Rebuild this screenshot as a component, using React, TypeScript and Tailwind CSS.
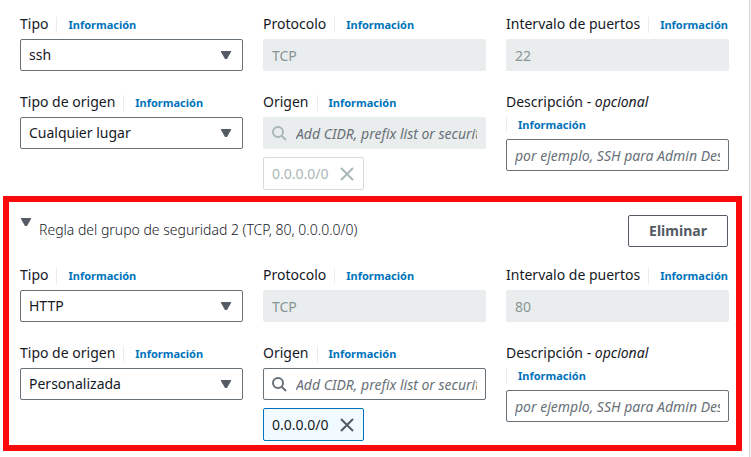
import { useId, type ReactNode } from "react";

type Rule = {
  type: string;
  port: string;
  source: string;
  locked: boolean;
};

const box =
  "block h-8 w-full rounded-xs border border-[#687078] bg-white px-2 text-sm text-[#16191f] outline-none placeholder:italic placeholder:text-[#687078] placeholder:opacity-100 disabled:border-[#eaeded] disabled:bg-[#eaeded] disabled:text-[#879596]";

function Triangle({ className = "" }: { className?: string }) {
  return (
    <svg aria-hidden="true" viewBox="0 0 10 8" className={`h-2 w-2.5 fill-[#545b64] ${className}`}>
      <path d="M0 0h10v1L6 8H4L0 1Z" />
    </svg>
  );
}

function Field({
  id,
  label,
  children,
}: {
  id: string;
  label: ReactNode;
  children: ReactNode;
}) {
  return (
    <div className="min-w-0">
      <div className="mb-1 flex flex-wrap gap-x-2">
        <label htmlFor={id} className="text-sm leading-[22px] text-[#16191f]">
          {label}
        </label>
        <a
          href="#info"
          className="mt-1 mb-0.5 h-4 border-l border-[#eaeded] pl-[11px] text-[11px] leading-4 font-bold text-[#0073bb]"
        >
          Información
        </a>
      </div>
      {children}
    </div>
  );
}

function SelectField({ label, value }: { label: string; value: string }) {
  const id = useId();
  return (
    <Field id={id} label={label}>
      <div className="relative">
        <select id={id} className={`${box} appearance-none`} defaultValue={value}>
          <option>{value}</option>
        </select>
        <Triangle className="pointer-events-none absolute top-3 right-3" />
      </div>
    </Field>
  );
}

function ReadonlyField({ label, value }: { label: string; value: string }) {
  const id = useId();
  return (
    <Field id={id} label={label}>
      <input id={id} className={box} defaultValue={value} disabled />
    </Field>
  );
}

function SourceField({ locked }: { locked: boolean }) {
  const id = useId();
  return (
    <Field id={id} label="Origen">
      <div className="relative">
        <input
          id={id}
          type="text"
          disabled={locked}
          placeholder="Add CIDR, prefix list or security group"
          className={`${box} pl-8`}
        />
        <svg
          aria-hidden="true"
          viewBox="0 0 16 16"
          className={`pointer-events-none absolute top-2 left-2 size-4 fill-none stroke-2 ${locked ? "stroke-[#aab7b8]" : "stroke-[#687078]"}`}
        >
          <circle cx="7" cy="7" r="5" />
          <path d="m10.5 10.5 4.5 4.5" />
        </svg>
      </div>
      <div
        className={`mt-2 inline-flex h-[33px] items-center gap-2.5 rounded-xs border px-2 align-top text-sm ${locked ? "border-[#d5dbdb] bg-white text-[#aab7b8]" : "border-[#0073bb] bg-[#f1faff] text-[#16191f]"}`}
      >
        0.0.0.0/0
        <button type="button" disabled={locked} aria-label="Quitar 0.0.0.0/0" className="size-4">
          <svg
            viewBox="0 0 16 16"
            className={`size-4 fill-none stroke-2 ${locked ? "stroke-[#aab7b8]" : "stroke-[#545b64]"}`}
          >
            <path d="m2 2 12 12M14 2 2 14" />
          </svg>
        </button>
      </div>
    </Field>
  );
}

function DescriptionField() {
  const id = useId();
  return (
    <Field
      id={id}
      label={
        <>
          Descripción - <i>opcional</i>
        </>
      }
    >
      <input
        id={id}
        type="text"
        placeholder="por ejemplo, SSH para Admin Desktop"
        className={box}
      />
    </Field>
  );
}

function RuleFields({ rule }: { rule: Rule }) {
  return (
    <div className="grid grid-cols-3 gap-5">
      <SelectField label="Tipo" value={rule.type} />
      <ReadonlyField label="Protocolo" value="TCP" />
      <ReadonlyField label="Intervalo de puertos" value={rule.port} />
      <SelectField label="Tipo de origen" value={rule.source} />
      <SourceField locked={rule.locked} />
      <DescriptionField />
    </div>
  );
}

export default function App() {
  return (
    <div className="min-h-screen bg-[#f2f3f3] pr-px font-['Noto_Sans',sans-serif]">
      <main className="min-h-screen border-r border-[#d5dbdb] bg-white pt-[13px]">
        <section className="px-5 pb-1.5">
          <RuleFields rule={{ type: "ssh", port: "22", source: "Cualquier lugar", locked: true }} />
        </section>
        <section className="mr-[7px] ml-[3px] border-6 border-[#fa0a0a] pt-[13px] pr-[7px] pb-1 pl-[11px]">
          <header className="mb-[17px] flex justify-between pr-px">
            <button type="button" className="flex items-start gap-2 pt-[3px] pl-px text-left">
              <Triangle />
              <span className="pt-0.5 text-sm leading-5 font-light text-[#16191f]">
                Regla del grupo de seguridad 2 (TCP, 80, 0.0.0.0/0)
              </span>
            </button>
            <button
              type="button"
              className="h-8 w-[100px] rounded-xs border border-[#545b64] text-sm font-bold text-[#545b64]"
            >
              Eliminar
            </button>
          </header>
          <RuleFields rule={{ type: "HTTP", port: "80", source: "Personalizada", locked: false }} />
        </section>
      </main>
    </div>
  );
}
